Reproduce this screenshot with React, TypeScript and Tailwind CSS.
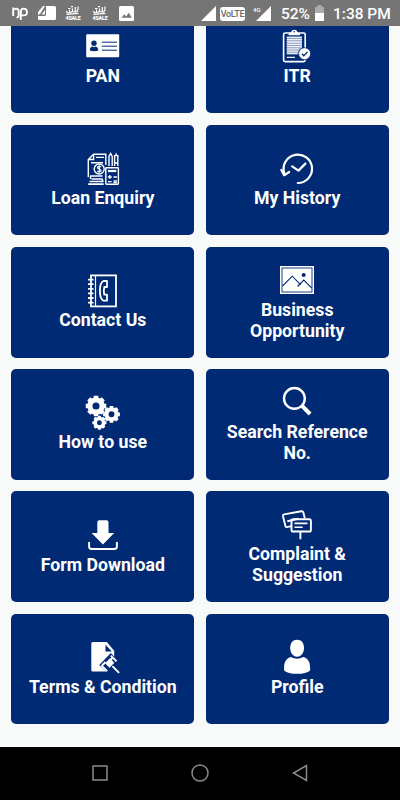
import type { ReactNode } from "react";

type MenuItem = {
  label: string;
  icon: ReactNode;
};

type GearProps = {
  cx: number;
  cy: number;
  r: number;
};

function Gear({ cx, cy, r }: Readonly<GearProps>) {
  return (
    <g transform={`translate(${cx} ${cy})`}>
      <circle r={r * 0.6} fill="none" stroke="#fff" strokeWidth={r * 0.5} />
      {[0, 45, 90, 135, 180, 225, 270, 315].map((angle) => (
        <rect
          key={angle}
          x={-r * 0.22}
          y={-r}
          width={r * 0.44}
          height={r * 0.35}
          rx={0.4}
          fill="#fff"
          transform={`rotate(${angle})`}
        />
      ))}
    </g>
  );
}

const menuItems: MenuItem[] = [
  {
    label: "PAN",
    icon: (
      <>
        <rect x="1.2" y="5.2" width="33" height="23" rx="1" fill="#fff" />
        <circle cx="9" cy="14.2" r="2.7" fill="#002a74" />
        <path d="M4.8 21.6c0-2.6 1.4-4 2.7-4l1.5.7 1.5-.7c1.3 0 2.8 1.4 2.8 4q-4.2 1.4-8.5 0Z" fill="#002a74" />
        <path d="M16.8 13.2H32M16.8 17.2H32M16.8 21.2H32" stroke="#002a74" strokeWidth="1" />
      </>
    ),
  },
  {
    label: "ITR",
    icon: (
      <>
        <rect x="4.6" y="4" width="21.6" height="28.6" rx="1.5" fill="none" stroke="#fff" strokeWidth="1.6" />
        <path d="M9.5 6.2V4.4l2.6-.8q.4-2.8 3.2-2.8t3.2 2.8l2.6.8v1.8Z" fill="#fff" />
        <circle cx="15.3" cy="2.8" r="0.8" fill="#002a74" />
        <rect x="7.8" y="7.6" width="15.2" height="17.6" fill="#8f9fc0" />
        <path d="M7.8 8.4H23M7.8 10.7H23M7.8 13H23M7.8 15.3H23M7.8 17.6H23M7.8 19.9H20M7.8 22.2H19M7.8 24.5H18.5M7.8 28.4H16" stroke="#eef1f7" strokeWidth="1.3" />
        <circle cx="25.6" cy="24.7" r="6" fill="#fff" stroke="#002a74" strokeWidth="0.8" />
        <path d="m22.8 24.8 2 2 3.7-3.9" fill="none" stroke="#002a74" strokeWidth="1.3" />
      </>
    ),
  },
  {
    label: "Loan Enquiry",
    icon: (
      <g fill="none" stroke="#fff" strokeWidth="1.4">
        <path d="M3.3 25V7.5l5.3-5.2h12.2V13M8.6 2.3v5.2H3.3M11 5.4h8M6 10.8h12" />
        <circle cx="14.2" cy="17" r="5" />
        <path d="M16 14.9c-.8-.8-3.5-.7-3.5.7 0 1.7 3.6 1.1 3.6 2.9 0 1.5-2.8 1.6-3.8.6M14.2 13.3v7.4" strokeWidth="1.2" />
        <path d="M5 24h12.5M6.5 27h11M4.5 29.5h14M3.2 32.2h15.5" strokeWidth="1.7" />
        <path d="M5.5 24v3M17.5 27v3" />
        <path d="M24 14V4.5l1.6-3 1.6 3V14M29.6 14V3.6h3.2V14M29.6 11h3.2M31.2 1.3v2.3" />
        <rect x="20.8" y="15.7" width="12.6" height="16.5" rx="0.7" />
        <path d="M23 19h8.3" strokeWidth="2.2" />
        <path d="M24.8 23v4M22.8 25h4M28.5 25h3.4M22.9 29.6h3.7M28.5 28.8h3.4M28.5 30.5h3.4" strokeWidth="1.3" />
      </g>
    ),
  },
  {
    label: "My History",
    icon: (
      <g fill="none" stroke="#fff" strokeWidth="2.2" strokeLinecap="round" strokeLinejoin="round">
        <path d="M18.8 31A14.2 14.2 0 1 0 5.2 20.8" />
        <path d="m2.3 17.9 2.9 5.3 5-3.2" />
        <path d="m13.2 14.4 6.2 4.2 7-7" />
      </g>
    ),
  },
  {
    label: "Contact Us",
    icon: (
      <g fill="none" stroke="#fff" strokeWidth="1.8">
        <rect x="6" y="1.4" width="25" height="31" />
        <path d="M10.5 1.4v31" strokeWidth="1.2" />
        <path d="M3 5.6h5.5M3 10.2h5.5M3 14.8h5.5M3 19.4h5.5M3 24h5.5M3 28.6h5.5" />
        <path d="M22 7h-3.5q-3.6 1.5-3.6 9.8t3.6 9.9H22v-6h-2.700q-1-4 0-7.700H22Z" strokeWidth="1.8" strokeLinejoin="round" />
      </g>
    ),
  },
  {
    label: "Business Opportunity",
    icon: (
      <>
        <rect x="1" y="3" width="34" height="28" fill="#fff" />
        <rect x="3" y="5" width="30" height="24" fill="none" stroke="#002a74" strokeWidth="0.9" />
        <path d="m3.5 23 9.8-9.8 8.4 8.6m-3.2 1.7 6.3-6.5 8 8.2" fill="none" stroke="#002a74" strokeWidth="1.1" />
        <circle cx="24.7" cy="12" r="2" fill="#002a74" />
      </>
    ),
  },
  {
    label: "How to use",
    icon: (
      <>
        <Gear cx={11} cy={10} r={10.2} />
        <Gear cx={26.5} cy={18.3} r={8.4} />
        <Gear cx={14.4} cy={26.7} r={7} />
      </>
    ),
  },
  {
    label: "Search Reference No.",
    icon: (
      <g fill="none" stroke="#fff">
        <circle cx="15.4" cy="13.4" r="10.4" strokeWidth="2.4" />
        <path d="m22.3 20.2 8.8 8.8" strokeWidth="4" />
      </g>
    ),
  },
  {
    label: "Form Download",
    icon: (
      <>
        <path d="M12.3 4.2q0-2 2-2h7.2q2 0 2 2v10.9h5.7L17.9 26.600 6.600 15.100h5.700Z" fill="#fff" />
        <path d="M4.1 24v4.600q0 2.400 2.400 2.400h23q2.400 0 2.400-2.400V24" fill="none" stroke="#fff" strokeWidth="1.9" />
      </>
    ),
  },
  {
    label: "Complaint & Suggestion",
    icon: (
      <g fill="none" stroke="#fff" strokeWidth="1.9" strokeLinejoin="round">
        <path d="m12.2 18.1-4.2 1q-1.100.2-1.500-.9L4 8.200q-.3-1.400 1-1.800l17.500-3.200q1.400-.2 1.800 1l1.500 6.100" />
        <path d="m8.300 13.200 11-2.500" />
        <rect x="12.5" y="11.3" width="19.4" height="12.2" rx="1.6" />
        <path d="M15.5 15.400h13M15.500 19.200h8.200" strokeWidth="1.6" />
        <path d="M21.400 23.500v7.700" />
      </g>
    ),
  },
  {
    label: "Terms & Condition",
    icon: (
      <>
        <path d="M7.8 2h14l7.400 8.700v12l-7 8.900H7.800q-1.500 0-1.500-1.500V3.500Q6.300 2 7.800 2Z" fill="#fff" />
        <path d="M20.500 4.700v6.700h6.300Z" fill="#002a74" />
        <path d="m14.300 25 11.500-12 8 8.500L23 33Z" fill="#002a74" />
        <path d="m24.900 18.200 4.500 4.600-4.900 5-4.500-4.600Z" fill="#fff" />
        <path
          d="m25.800 15.600 5.800 5.800M16.400 25.400l5.800 5.800M27.400 26.100l6.700 6.800M17 25.500l3.500-3.500M27.800 17.500l-2 2"
          fill="none"
          stroke="#fff"
          strokeWidth="1.9"
        />
      </>
    ),
  },
  {
    label: "Profile",
    icon: (
      <g fill="#fff">
        <path d="M18.1-.2c4.400 0 7 3.400 6.900 8.200 0 5-3 8.800-6.900 8.800S11.200 13 11.200 8c0-4.800 2.500-8.200 6.900-8.200Z" />
        <path d="M11.800 17q6.300 3.400 12.600 0c4 .7 6.700 5 6.700 10.100v3.300q-3.800 3.400-13 3.400t-13-3.400v-3.300c0-5.100 2.700-9.400 6.700-10.100Z" />
      </g>
    ),
  },
];

function MenuCard({ label, icon }: Readonly<MenuItem>) {
  return (
    <button className="flex h-[110.6px] flex-col items-center justify-center rounded-[5px] bg-[#002a74] px-3 text-white">
      <svg viewBox="0 0 36 36" className="size-9 shrink-0 overflow-visible">
        {icon}
      </svg>
      <span className="-mb-[0.5px] pt-[0.5px] text-center text-[17.7px] leading-[21px] font-bold">
        {label}
      </span>
    </button>
  );
}

function SaleIcon() {
  return (
    <div className="flex w-4 flex-col items-center">
      <svg viewBox="0 0 16 9" className="h-[9px] w-4 shrink-0" fill="none" stroke="#fff" strokeWidth="1.2">
        <path d="M1.5 5q.2 2.500 3 1.500V3.500M4.500 6q2 1 3-1V2.500M7.500 5.500q2 1 2.800-.5V1M10.300 6q3 .5 2.800-5.500M3 2.500h2.500M6 .7h2" />
        <path d="m1.500 8.300 12-1" />
      </svg>
      <span className="text-[5.5px] leading-[6px] font-black tracking-[-0.3px]">
        4SALE
      </span>
    </div>
  );
}

function StatusBar() {
  return (
    <header className="flex h-[26px] shrink-0 items-center bg-[#757575] pr-[10px] pl-3 text-white">
      <svg viewBox="0 0 16 16" className="h-4 w-4" fill="none" stroke="#fff" strokeWidth="1.9">
        <path d="M1.2 2.5V11M1.200 4.400q5.500-2 5.500 2.200v4q0 2-2.200 1.800" />
        <path d="M8.800 15V6.800q0-3.200 3-3.200T15 7t-3.200 3.400H9" />
      </svg>
      <svg viewBox="0 0 18 14" className="ml-[10px] h-[14px] w-[18px]">
        <path d="M8 0h8.500Q18 0 18 1.500v11q0 1.500-1.500 1.500h-15Q0 14 0 12.500V10h6.500Q8 10 8 8.500Z" fill="#fff" />
        <path d="M0 9V6l5-6h2L2 8ZM3.500 8.500 7 4v4.500Z" fill="#fff" />
      </svg>
      <div className="ml-[9px] flex gap-[11px]">
        <SaleIcon />
        <SaleIcon />
      </div>
      <svg viewBox="0 0 15 15" className="ml-[11px] h-[15px] w-[15px]">
        <rect width="15" height="15" rx="1.5" fill="#fff" />
        <path d="m2.500 11.800 2.700-3.600 2 2.200 2.600-3.600 3 5Z" fill="#757575" />
      </svg>
      <svg viewBox="0 0 15 15" className="mt-px ml-auto h-[15px] w-[15px]">
        <path d="M15 0v15H0Z" fill="#fff" />
      </svg>
      <span className="mt-[2px] ml-[4px] flex h-[14px] w-[25px] items-center justify-center rounded-[3px] bg-white text-[9px] leading-none font-medium tracking-[-0.3px] text-[#686868]">
        VoLTE
      </span>
      <span className="-mt-[6px] ml-[8px] w-[7px] text-[6px] leading-none font-medium">
        4G
      </span>
      <svg viewBox="0 0 15 15" className="mt-px -ml-[4px] h-[15px] w-[15px]">
        <path d="M15 0v15H0Z" fill="#fff" />
      </svg>
      <span className="mt-[3px] ml-[10px] w-[29px] text-[15.5px] leading-none font-medium whitespace-nowrap">
        52%
      </span>
      <svg viewBox="0 0 9 16" className="ml-[5px] h-4 w-[9px]">
        <path d="M2.500 0h4v2H9v6H0V2h2.500Z" fill="#acacac" />
        <path d="M0 8h9v8H0Z" fill="#fff" />
      </svg>
      <span className="mt-[3px] ml-[9px] w-[57px] text-[15.5px] leading-none font-medium whitespace-nowrap">
        1:38 PM
      </span>
    </header>
  );
}

function NavigationBar() {
  return (
    <nav className="flex h-[53.5px] shrink-0 items-center justify-center gap-[82px] bg-black">
      <svg viewBox="0 0 18 18" className="size-[18px]" fill="none" stroke="#8b8b8b" strokeWidth="1.5">
        <rect x="2" y="2" width="14" height="14" />
      </svg>
      <svg viewBox="0 0 18 18" className="size-[18px]" fill="none" stroke="#8b8b8b" strokeWidth="1.5">
        <circle cx="9" cy="9" r="8" />
      </svg>
      <svg viewBox="0 0 18 18" className="size-[18px]" fill="none" stroke="#8b8b8b" strokeWidth="1.5">
        <path d="M15.5 1.5v15L2.5 9Z" />
      </svg>
    </nav>
  );
}

export default function App() {
  return (
    <div className="flex h-[800px] w-[400px] flex-col overflow-hidden bg-[#f8faf9] font-[Roboto,sans-serif]">
      <StatusBar />
      <main className="min-h-0 flex-1 overflow-hidden">
        <div className="-mt-[23.4px] grid grid-cols-2 gap-[11.6px] px-[11.4px]">
          {menuItems.map((item) => (
            <MenuCard key={item.label} label={item.label} icon={item.icon} />
          ))}
        </div>
      </main>
      <NavigationBar />
    </div>
  );
}
